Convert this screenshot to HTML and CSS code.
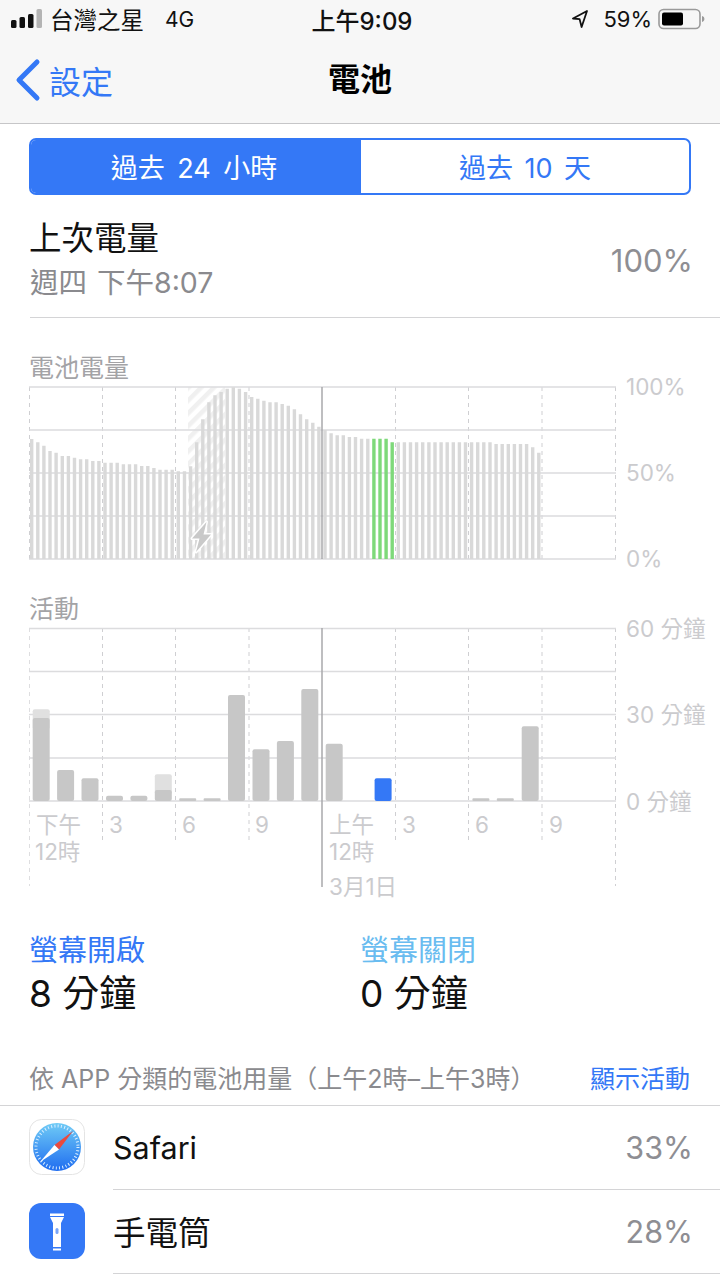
FILE: index.html
```html
<!DOCTYPE html>
<html lang="zh-Hant">
<head>
<meta charset="utf-8">
<title>電池</title>
<link rel="stylesheet" href="styles.css">
</head>
<body>
<div class="page">
  <header class="chrome">
    <div class="status">
      <div class="status-left">
        <svg class="signal" width="32" height="20" viewBox="0 0 32 20"><rect class="sig" x="0" y="11" width="5.500" height="8" rx="1.500"/><rect class="sig" x="8.500" y="8" width="5.500" height="11" rx="1.500"/><rect class="sig" x="17" y="5" width="5.500" height="14" rx="1.500"/><rect class="sig-off" x="25.500" y="0" width="5.500" height="19" rx="1.500"/></svg>
        <span class="carrier">台灣之星</span><span class="net">4G</span>
      </div>
      <div class="status-time">上午9:09</div>
      <div class="status-right">
        <svg class="loc" width="16" height="18" viewBox="0 0 16 18"><path d="M15 1 1 8.500l6.600.6L9.600 17z" fill="none" stroke="#111" stroke-width="1.800" stroke-linejoin="round"/></svg>
        <span class="pct">59%</span>
        <svg class="batt" width="48" height="22" viewBox="0 0 48 22"><rect x="1" y="1.500" width="41" height="19" rx="4.500" fill="none" stroke="#9a9a9a" stroke-width="1.600"/><rect x="4" y="4.500" width="21" height="13" rx="2" fill="#000"/><path d="M44 8v6c1.600-.4 2.400-1.600 2.400-3S45.600 8.400 44 8z" fill="#9a9a9a"/></svg>
      </div>
    </div>
    <nav class="nav">
      <a class="back">
        <svg width="26" height="44" viewBox="0 0 26 44"><path d="M22 4 4 22l18 18" fill="none" stroke="#3478f6" stroke-width="5" stroke-linecap="round" stroke-linejoin="round"/></svg>
        <span>設定</span>
      </a>
      <h1 class="nav-title">電池</h1>
    </nav>
  </header>

  <main>
    <div class="segment">
      <div class="seg seg-on">過去 24 小時</div>
      <div class="seg">過去 10 天</div>
    </div>

    <section class="last">
      <div>
        <div class="last-title">上次電量</div>
        <div class="last-sub">週四 下午8:07</div>
      </div>
      <div class="last-val">100%</div>
    </section>

    <h2 class="chart-title">電池電量</h2>
    <svg class="chart" width="720" height="190" viewBox="0 383 720 190">
      <defs>
        <pattern id="hatch" width="9" height="9" patternUnits="userSpaceOnUse" patternTransform="rotate(-45)">
          <rect width="9" height="4.500" fill="#f0f0f0"/>
        </pattern>
      </defs>
      <path class="dash" d="M29.500 387V559M102.500 387V559M175.500 387V559M249 387V559M395.500 387V559M468.500 387V559M542 387V559M615.500 387V559"/>
      <rect x="188" y="387" width="37" height="172" fill="url(#hatch)"/>
      <path class="grid" d="M29 387H616M29 430H616M29 473H616M29 516H616M29 559H616"/>
      <path class="bars" d="M31.700 559V439M37.800 559V442.300M43.900 559V445.700M50 559V451M56.100 559V452.700M62.300 559V456M68.400 559V456M74.500 559V457.700M80.600 559V459.300M86.700 559V459.300M92.800 559V461M98.900 559V461M105 559V462.700M111.100 559V462.700M117.200 559V462.700M123.400 559V464.300M129.500 559V464.300M135.600 559V464.300M141.700 559V466M147.800 559V466M153.900 559V468M160 559V469.700M166.100 559V469.700M172.200 559V469.700M178.300 559V471.300M184.500 559V471.300M190.600 559V466.300M196.700 559V442.300M202.800 559V419.300M208.900 559V402.300M215 559V395.300M221.100 559V392M227.200 559V388.700M233.300 559V387.300M239.400 559V388.700M245.600 559V392M251.700 559V397M257.800 559V398.700M263.900 559V400.700M270 559V402.300M276.100 559V402.300M282.200 559V404M288.300 559V405.700M294.400 559V409.300M300.500 559V414.300M306.700 559V419.300M312.800 559V422.700M318.900 559V426.700M325 559V430M331.100 559V433.300M337.200 559V435.300M343.300 559V435.300M349.400 559V437M355.500 559V437M361.600 559V438.700M367.800 559V438.700M398.300 559V442.300M404.400 559V442.300M410.500 559V442.300M416.600 559V442.300M422.700 559V442.300M428.900 559V442.300M435 559V442.300M441.100 559V442.300M447.200 559V442.300M453.300 559V442.300M459.400 559V442.300M465.500 559V442.300M471.600 559V442.300M477.700 559V442.300M483.800 559V442.300M490 559V442.300M496.100 559V444M502.200 559V444M508.300 559V444M514.400 559V444M520.500 559V444M526.600 559V444M532.700 559V447.300M538.800 559V452.700"/>
      <path class="bars-green" d="M373.900 559V438.700M380 559V438.700M386.100 559V438.700M392.200 559V442.300"/>
      <path class="now" d="M322 387V559"/>
      <path class="bolt" d="M206.500 522 192 538.500H199.500L196 552 211 534.500H203.500z"/>
      <text class="axis" x="626" y="395">100%</text>
      <text class="axis" x="626" y="481">50%</text>
      <text class="axis" x="626" y="567">0%</text>
    </svg>

    <h2 class="chart-title chart-title-2">活動</h2>
    <svg class="chart" width="720" height="272" viewBox="0 624 720 272">
      <path class="dash-light" d="M29.500 628V886"/>
      <path class="dash" d="M102.500 628V843M175.500 628V843M249 628V843M395.500 628V843M468.500 628V843M542 628V843M615.500 628V886"/>
      <path class="grid" d="M29 628.500H616M29 671.500H616M29 714.500H616M29 758H616M29 801H616"/>
      <rect class="col-light" x="32.700" y="709.300" width="17" height="20" rx="2"/>
      <rect class="col-light" x="154.800" y="774.300" width="17" height="20" rx="2"/>
      <rect class="col" x="32.700" y="718" width="17" height="83" rx="2"/>
      <rect class="col" x="57.100" y="770" width="17" height="31" rx="2"/>
      <rect class="col" x="81.500" y="778.300" width="17" height="22.700" rx="2"/>
      <rect class="col" x="106" y="795.700" width="17" height="5.300" rx="2"/>
      <rect class="col" x="130.400" y="795.700" width="17" height="5.300" rx="2"/>
      <rect class="col" x="154.800" y="790" width="17" height="11" rx="2"/>
      <rect class="col" x="179.200" y="798.300" width="17" height="2.700" rx="1"/>
      <rect class="col" x="203.600" y="798.300" width="17" height="2.700" rx="1"/>
      <rect class="col" x="228" y="695" width="17" height="106" rx="2"/>
      <rect class="col" x="252.500" y="749.300" width="17" height="51.700" rx="2"/>
      <rect class="col" x="276.900" y="741" width="17" height="60" rx="2"/>
      <rect class="col" x="301.300" y="689" width="17" height="112" rx="2"/>
      <rect class="col" x="325.700" y="743.700" width="17" height="57.300" rx="2"/>
      <rect class="col-blue" x="374.600" y="778.300" width="17" height="22.700" rx="2"/>
      <rect class="col" x="472.400" y="798.300" width="17" height="2.700" rx="1"/>
      <rect class="col" x="496.800" y="798.300" width="17" height="2.700" rx="1"/>
      <rect class="col" x="521.700" y="726.300" width="17" height="74.700" rx="2"/>
      <path class="now" d="M322 628V887"/>
      <text class="axis" x="626" y="637">60 分鐘</text>
      <text class="axis" x="626" y="723">30 分鐘</text>
      <text class="axis" x="626" y="810">0 分鐘</text>
      <text class="axis" x="36" y="833">下午</text>
      <text class="axis" x="35" y="860">12時</text>
      <text class="axis" x="109" y="833">3</text>
      <text class="axis" x="182" y="833">6</text>
      <text class="axis" x="255" y="833">9</text>
      <text class="axis" x="329" y="833">上午</text>
      <text class="axis" x="329" y="860">12時</text>
      <text class="axis" x="329" y="895">3月1日</text>
      <text class="axis" x="402" y="833">3</text>
      <text class="axis" x="475" y="833">6</text>
      <text class="axis" x="549" y="833">9</text>
    </svg>

    <section class="screen">
      <div class="screen-col">
        <div class="screen-label">螢幕開啟</div>
        <div class="screen-val">8 分鐘</div>
      </div>
      <div class="screen-col">
        <div class="screen-label screen-label-off">螢幕關閉</div>
        <div class="screen-val">0 分鐘</div>
      </div>
    </section>

    <div class="usage-head">
      <span>依 APP 分類的電池用量（上午2時–上午3時）</span>
      <a class="usage-link">顯示活動</a>
    </div>

    <ul class="apps">
      <li class="app">
        <svg class="app-icon" width="56" height="56" viewBox="0 0 56 56">
          <defs><linearGradient id="saf" x1="0" y1="0" x2="0" y2="1"><stop offset="0" stop-color="#6fcbf6"/><stop offset="1" stop-color="#1f6df0"/></linearGradient></defs>
          <rect x=".5" y=".5" width="55" height="55" rx="12" fill="#fff" stroke="#e4e4e4"/>
          <circle cx="28" cy="28" r="24" fill="url(#saf)"/>
          <circle cx="28" cy="28" r="21" fill="none" stroke="#dcefff" stroke-width="3" stroke-dasharray="1 2.300"/>
          <path d="M44 12 25.500 26l4.500 4.500z" fill="#ea4a3e"/>
          <path d="M11 43 25.500 26l4.500 4.500z" fill="#fff"/>
        </svg>
        <div class="app-body"><span class="app-name">Safari</span><span class="app-pct">33%</span></div>
      </li>
      <li class="app">
        <svg class="app-icon" width="56" height="56" viewBox="0 0 56 56">
          <rect width="56" height="56" rx="12" fill="#3478f6"/>
          <path d="M21 10.500H35V13H21zM21 14H35L32 20V44H24V20z" fill="#fff"/>
          <rect x="24" y="45.500" width="8" height="2" fill="#fff"/>
          <rect x="26.500" y="25" width="3" height="6" rx="1.500" fill="#7aa6f8"/>
        </svg>
        <div class="app-body"><span class="app-name app-name-cjk">手電筒</span><span class="app-pct">28%</span></div>
      </li>
    </ul>
  </main>
</div>
</body>
</html>
```

FILE: styles.css
```css
* { box-sizing: border-box; }
html, body { margin: 0; padding: 0; background: #fff; }
body { font-family: Inter, "Noto Sans CJK TC", sans-serif; color: #000; }
.page { width: 720px; height: 1280px; overflow: hidden; }
h1, h2, ul { margin: 0; padding: 0; font: inherit; list-style: none; }

.chrome { background: #f7f7f7; border-bottom: 1px solid #c6c6c8; height: 124px; }
.status { height: 38px; display: grid; grid-template-columns: 1fr auto 1fr; align-items: center; font-size: 23px; color: #111; }
.status-left { display: flex; align-items: center; padding-left: 11px; }
.signal { margin-right: 7px; flex: none; }
.carrier { font-size: 23.500px; }
.net { margin-left: 21px; font-size: 21px; }
.status-time { font-size: 24px; font-weight: 500; padding-left: 4px; }
.status-right { display: flex; align-items: center; justify-content: flex-end; padding-right: 14px; }
.loc { margin-right: 15px; }
.pct { font-size: 22px; margin-right: 6px; }

.nav { height: 85px; position: relative; display: flex; align-items: center; justify-content: center; }
.back { position: absolute; left: 15px; top: 0; bottom: 2px; display: flex; align-items: center; gap: 8px; color: #3478f6; font-size: 32px; }
.nav-title { font-size: 32px; font-weight: 600; line-height: 1; margin-bottom: 2px; }

.segment { display: grid; grid-template-columns: 330px 1fr; height: 57px; margin: 14px 29px 0; border: 2px solid #3478f6; border-radius: 7px; overflow: hidden; color: #3478f6; font-size: 27px; word-spacing: 4px; }
.seg { display: flex; align-items: center; justify-content: center; }
.seg-on { background: #3478f6; color: #fff; padding-right: 4px; word-spacing: 5px; }

.last { height: 123px; margin-left: 30px; padding: 8px 27px 0 0; border-bottom: 1px solid #d4d4d6; display: flex; align-items: center; justify-content: space-between; }
.last-title { font-size: 32.500px; line-height: 44px; color: #111; margin-left: -1px; }
.last-sub { font-size: 28.500px; line-height: 40px; color: #8a8a8e; margin-top: 2px; word-spacing: 2px; }
.last-val { font-size: 31px; color: #8e8e93; }

.chart-title { font-size: 25px; line-height: 30px; color: #a3a3a6; margin: 35px 0 0 29px; font-weight: 400; }
.chart-title-2 { margin-top: 21px; }
.chart { display: block; overflow: visible; }
.grid { stroke: #dcdcde; stroke-width: 1.500; fill: none; }
.dash { stroke: #cfcfd2; stroke-width: 1; stroke-dasharray: 4 4; fill: none; }
.dash-light { stroke: #dedee0; stroke-width: 1; stroke-dasharray: 4 4; fill: none; }
.bars { stroke: #d9d9d9; stroke-width: 3.400; fill: none; }
.bars-green { stroke: #7ed97a; stroke-width: 3.400; fill: none; }
.now { stroke: #a9a9ab; stroke-width: 1.500; fill: none; }
.bolt { fill: #c9c9c9; stroke: #fff; stroke-width: 3; stroke-linejoin: round; paint-order: stroke; }
.axis { font-size: 22.500px; fill: #cbcbce; }
.col { fill: #c7c7c7; }
.col-light { fill: #e0e0e0; }
.col-blue { fill: #3478f6; }
.sig { fill: #111; }
.sig-off { fill: #b4b4b4; }

.screen { display: grid; grid-template-columns: 331px 1fr; margin: 37px 0 0 29px; }
.screen-label { font-size: 29px; line-height: 36px; color: #3478f6; }
.screen-label-off { color: #69bcf0; }
.screen-val { font-size: 37px; line-height: 46px; margin-top: 2px; color: #111; }

.usage-head { display: flex; justify-content: space-between; align-items: center; margin: 44px 30px 0 29px; height: 32px; font-size: 25px; color: #8a8a8e; white-space: nowrap; }
.usage-link { color: #3478f6; }

.apps { margin-top: 12px; border-top: 1px solid #d4d4d6; }
.app { display: flex; align-items: center; padding-left: 29px; height: 84px; }
.app-icon { flex: none; margin: 0 28px 2px 0; }
.app-body { flex: 1; align-self: stretch; display: flex; align-items: center; justify-content: space-between; padding-right: 27px; border-bottom: 1px solid #d4d4d6; }
.app-name { font-size: 30.500px; color: #111; }
.app-name-cjk { font-size: 32.500px; margin-bottom: 3px; }
.app-pct { font-size: 30.500px; color: #8e8e93; }
```
